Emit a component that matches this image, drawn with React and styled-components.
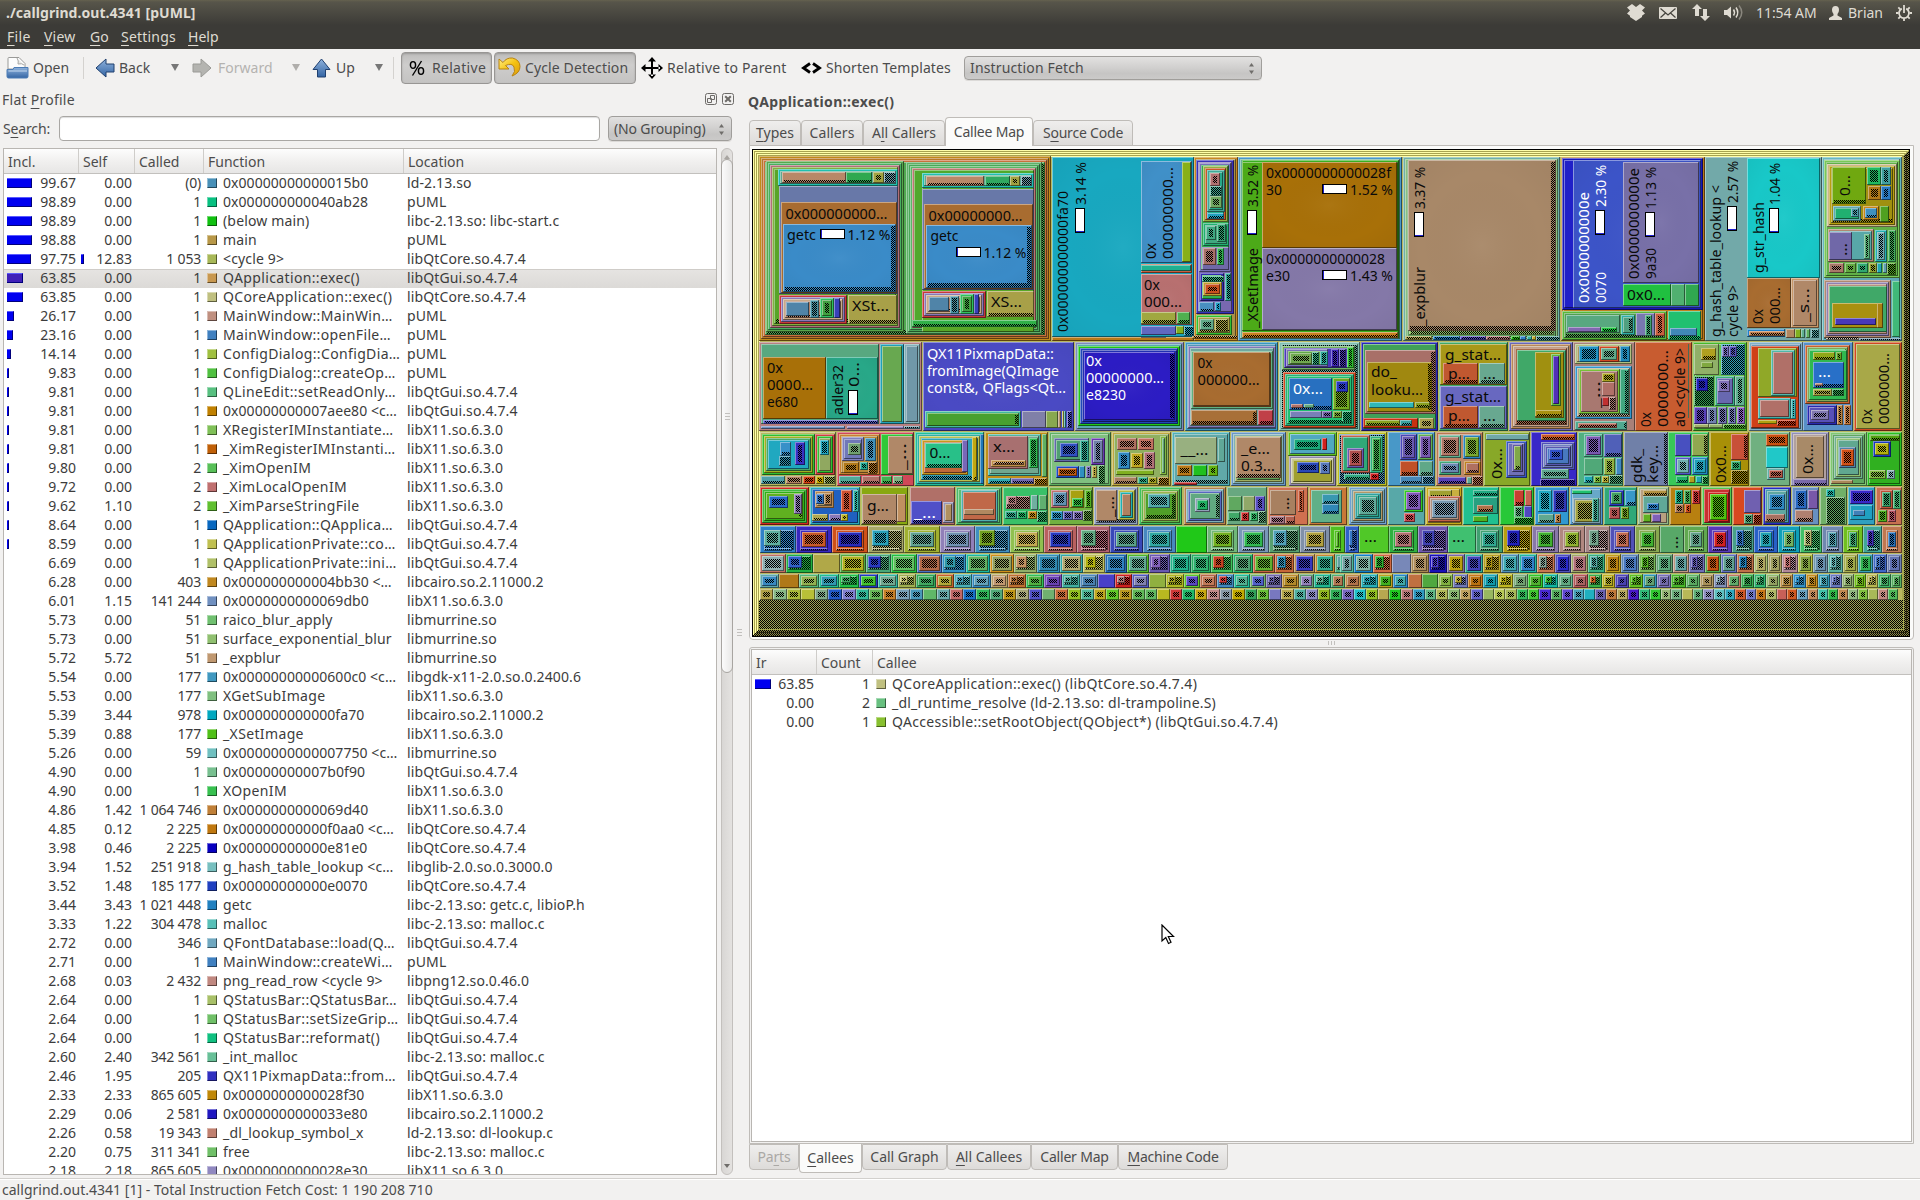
import React from "react";
import styled, { createGlobalStyle } from "styled-components";

const Global = createGlobalStyle`
  * { box-sizing: border-box; }
  body { margin: 0; background: #f2f1f0; overflow: hidden; }
  u { text-decoration-thickness: 1px; text-underline-offset: 3px; }
`;

const Window = styled.div`
  width: 1920px;
  height: 1200px;
  display: flex;
  flex-direction: column;
  background: #f2f1f0;
  color: #4c4c4c;
  font: 14px/19px "Noto Sans", "Open Sans", sans-serif;
  white-space: pre;
  overflow: hidden;
`;

/* ---------- top panel ---------- */
const TopPanel = styled.header`
  height: 49px;
  flex: none;
  background: linear-gradient(#65624f 0, #57554a 2px, #3c3b37 25px, #3c3b37 100%);
  color: #dfdbd2;
`;
const TitleRow = styled.div`
  height: 25px;
  display: flex;
  align-items: center;
  padding-left: 6px;
`;
const Title = styled.div`
  width: 1621px;
  font-weight: 700;
  letter-spacing: 0.05px;
  padding-bottom: 1px;
`;
const Indicator = styled.div`
  width: ${(p) => p.$w}px;
  flex: none;
  display: flex;
  align-items: center;
  letter-spacing: ${(p) => p.$ls || 0}px;
`;
const MenuRow = styled.nav`
  height: 24px;
  display: flex;
  align-items: center;
  padding: 0 0 2px 7px;
`;
const MenuItem = styled.span`
  width: ${(p) => p.$w}px;
  letter-spacing: ${(p) => p.$ls || 0}px;
`;

/* ---------- toolbar ---------- */
const Toolbar = styled.div`
  height: 38px;
  flex: none;
  display: flex;
  align-items: center;
  padding: 0 0 1px 6px;
`;
const Tool = styled.div`
  width: ${(p) => p.$w}px;
  flex: none;
  display: flex;
  align-items: center;
  gap: ${(p) => p.$gap ?? 4}px;
  color: ${(p) => (p.$off ? "#b5b3b0" : "#4c4c4c")};
  letter-spacing: ${(p) => p.$ls || 0}px;
`;
const Divider = styled.div`
  width: 1px;
  height: 22px;
  flex: none;
  background: #d4d2cf;
  margin-right: ${(p) => p.$gap}px;
`;
const Caret = styled.div`
  width: 0;
  flex: none;
  border: 4px solid transparent;
  border-top: 7px solid ${(p) => (p.$off ? "#b0aeab" : "#777")};
  border-bottom: 0;
  margin-right: ${(p) => p.$gap}px;
`;
const Toggle = styled.div`
  width: ${(p) => p.$w}px;
  height: 32px;
  flex: none;
  display: flex;
  align-items: center;
  gap: ${(p) => p.$gap}px;
  padding-left: ${(p) => p.$pl}px;
  margin-right: ${(p) => p.$mr}px;
  border: 1px solid #989694;
  border-radius: 4px;
  background: linear-gradient(#bebdbc, #cecdcc 40%, #c4c3c2);
  box-shadow: inset 0 1px 2px rgba(0, 0, 0, 0.2);
  letter-spacing: ${(p) => p.$ls || 0}px;
`;
const Combo = styled.div`
  width: ${(p) => p.$w}px;
  height: ${(p) => p.$h}px;
  flex: none;
  display: flex;
  align-items: center;
  justify-content: space-between;
  padding: 0 6px 0 5px;
  border: 1px solid #a09e9b;
  border-radius: 4px;
  background: linear-gradient(#e2e1e0, #d2d1d0 45%, #c6c5c4 75%, #cbcac9);
  box-shadow: 0 1px 0 #dcdad8;
  letter-spacing: ${(p) => p.$ls || 0}px;
`;

/* ---------- body ---------- */
const Main = styled.main`
  flex: 1;
  display: flex;
  min-height: 0;
`;
const LeftPane = styled.section`
  width: 737px;
  flex: none;
  display: flex;
  flex-direction: column;
`;
const DockTitle = styled.div`
  height: 26px;
  display: flex;
  align-items: center;
  padding: 0 3px 2px 2px;
  gap: 5px;
  letter-spacing: 0.25px;
  & > span { flex: 1; }
`;
const SearchRow = styled.div`
  height: 32px;
  display: flex;
  align-items: center;
  padding: 0 0 1px 3px;
  letter-spacing: -0.15px;
`;
const SearchLabel = styled.label`
  width: 56px;
`;
const SearchInput = styled.div`
  width: 541px;
  height: 25px;
  margin-right: 8px;
  border: 1px solid #a9a7a4;
  border-radius: 4px;
  background: #fff;
  box-shadow: inset 0 1px 1px #ddd;
`;
const ListArea = styled.div`
  height: 1027px;
  margin: 3px 0 0 3px;
  display: flex;
  gap: 4px;
`;
const List = styled.div`
  width: ${(p) => p.$w}px;
  flex: none;
  border: 1px solid #b9b6b2;
  background: #fff;
  overflow: hidden;
`;
const HeaderRow = styled.div`
  height: 25px;
  display: flex;
  background: linear-gradient(#fdfdfd, #f1f0ef 50%, #e7e6e5);
  border-bottom: 1px solid #c2c0bd;
`;
const HeaderCell = styled.div`
  width: ${(p) => p.$w}px;
  flex: none;
  padding: 3px 0 0 4px;
  border-right: ${(p) => (p.$last ? 0 : 1)}px solid #cfcdca;
`;
const Row = styled.div`
  height: 19px;
  display: flex;
  align-items: center;
  padding-bottom: 2px;
  color: #3c3c3c;
  background: ${(p) => (p.$sel ? "linear-gradient(#e6e4e2, #dcdad7)" : "none")};
  box-shadow: ${(p) => (p.$sel ? "inset 0 1px #cfccc8" : "none")};
`;
const NumCell = styled.div`
  width: ${(p) => p.$w}px;
  flex: none;
  display: flex;
  align-items: center;
  justify-content: space-between;
  padding: 0 2px 0 3px;
  & > span { margin-left: auto; }
  letter-spacing: ${(p) => p.$ls || 0}px;
`;
const Meter = styled.i`
  height: 10px;
  background: ${(p) => p.$c};
  border-right: 1px solid #00007a;
  border-bottom: 1px solid #00007a;
  border-top: 1px solid #5a5aff;
`;
const NameCell = styled.div`
  width: ${(p) => p.$w}px;
  flex: none;
  display: flex;
  align-items: center;
  gap: 6px;
  padding-left: ${(p) => p.$pl ?? 4}px;
  letter-spacing: ${(p) => p.$ls || 0}px;
`;
const Swatch = styled.i`
  width: 10px;
  height: 10px;
  flex: none;
  background: ${(p) => p.$c};
  border: 1px solid;
  border-color: rgba(255, 255, 255, 0.4) rgba(0, 0, 0, 0.5) rgba(0, 0, 0, 0.5) rgba(255, 255, 255, 0.4);
  background-clip: border-box;
`;
const ScrollBar = styled.div`
  width: 12px;
  display: flex;
  flex-direction: column;
  align-items: center;
  justify-content: space-between;
  padding: 6px 0;
  border: 1px solid #c3c0bd;
  border-radius: 6px;
  background: linear-gradient(90deg, #d8d6d4, #e4e2e0);
`;
const Thumb = styled.div`
  width: 12px;
  height: 514px;
  margin: 0 -1px auto;
  border: 1px solid #a8a5a1;
  border-radius: 6px;
  background: linear-gradient(90deg, #fbfbfb, #e9e8e7);
  display: flex;
  align-items: center;
  justify-content: center;
`;
const Grip = styled.div`
  width: ${(p) => (p.$v ? 8 : 5)}px;
  height: ${(p) => (p.$v ? 4 : 7)}px;
  background: repeating-linear-gradient(${(p) => (p.$v ? "90deg" : "180deg")}, #c2c0bd 0 1px, transparent 1px 3px);
`;
const Splitter = styled.div`
  width: 11px;
  flex: none;
  display: flex;
  padding-left: 0;
  padding-top: 542px;
`;
const RightPane = styled.section`
  flex: 1;
  display: flex;
  flex-direction: column;
`;
const FunctionTitle = styled.h1`
  height: 29px;
  margin: 0;
  padding-top: 5px;
  font-size: 14px;
  line-height: 19px;
  letter-spacing: 0.37px;
`;
const Tabs = styled.div`
  height: ${(p) => (p.$below ? 29 : 30)}px;
  display: flex;
  align-items: ${(p) => (p.$below ? "flex-start" : "flex-end")};
  padding-left: 1px;
  position: relative;
`;
const Tab = styled.div`
  width: ${(p) => p.$w}px;
  height: ${(p) => (p.$on ? 29 : 26)}px;
  padding-bottom: 2px;
  display: flex;
  align-items: center;
  justify-content: center;
  border: 1px solid #bfbcb8;
  border-${(p) => (p.$below ? "top" : "bottom")}: ${(p) => (p.$on ? 0 : 1)}px solid #bfbcb8;
  border-radius: ${(p) => (p.$below ? "0 0 4px 4px" : "4px 4px 0 0")};
  background: ${(p) => (p.$on ? "#fbfbfa" : "linear-gradient(#efeeed, #dddbd9)")};
  color: ${(p) => (p.$off ? "#aaa8a5" : "#4c4c4c")};
  letter-spacing: ${(p) => p.$ls ?? -0.2}px;
`;
const MapFrame = styled.div`
  width: 1165px;
  height: 495px;
  flex: none;
  margin-left: 1px;
  margin-top: -1px;
  padding: 3px 0 0 2px;
  border: 1px solid #bfbcb8;
  border-radius: 0 0 4px 4px;
  background: #fbfbfa;
  line-height: 0;
`;
const HSplitter = styled.div`
  height: 7px;
  flex: none;
  padding: 1px 0 0 580px;
`;
const CalleeFrame = styled.div`
  width: 1165px;
  height: 497px;
  flex: none;
  margin-left: 1px;
  padding: 1px;
  border: 1px solid #bfbcb8;
  border-radius: 3px 3px 0 0;
  display: flex;
`;
const StatusBar = styled.footer`
  height: 22px;
  flex: none;
  border-top: 1px solid #d2d0cd;
  box-shadow: inset 0 1px #fff;
  padding: 1px 0 0 2px;
  letter-spacing: 0.02px;
`;
const Pointer = styled.svg`
  position: absolute;
  left: 1161px;
  top: 924px;
`;

/* ---------- function list data ---------- */
const FUNCS = `99.67|0.00|(0)|4890b8|0x00000000000015b0|ld-2.13.so
98.89|0.00|1|08c080|0x000000000040ab28|pUML
98.89|0.00|1|10c010|(below main)|libc-2.13.so: libc-start.c
98.88|0.00|1|b89848|main|pUML
97.75|12.83|1 053|a8b858|<cycle 9>|libQtCore.so.4.7.4
63.85|0.00|1|c89850|QApplication::exec()|libQtGui.so.4.7.4
63.85|0.00|1|c0c080|QCoreApplication::exec()|libQtCore.so.4.7.4
26.17|0.00|1|c09080|MainWindow::MainWin…|pUML
23.16|0.00|1|4080c0|MainWindow::openFile…|pUML
14.14|0.00|1|a0c040|ConfigDialog::ConfigDia…|pUML
9.83|0.00|1|50c040|ConfigDialog::createOp…|pUML
9.81|0.00|1|58c080|QLineEdit::setReadOnly…|libQtGui.so.4.7.4
9.81|0.00|1|c08000|0x00000000007aee80 <c…|libQtGui.so.4.7.4
9.81|0.00|1|80c058|XRegisterIMInstantiate…|libX11.so.6.3.0
9.81|0.00|1|c06008|_XimRegisterIMInstanti…|libX11.so.6.3.0
9.80|0.00|2|58c058|_XimOpenIM|libX11.so.6.3.0
9.72|0.00|2|c07070|_XimLocalOpenIM|libX11.so.6.3.0
9.62|1.10|2|60c030|_XimParseStringFile|libX11.so.6.3.0
8.64|0.00|1|0868c0|QApplication::QApplica…|libQtGui.so.4.7.4
8.59|0.00|1|c0c050|QApplicationPrivate::co…|libQtGui.so.4.7.4
6.69|0.00|1|b0c068|QApplicationPrivate::ini…|libQtGui.so.4.7.4
6.28|0.00|403|c08820|0x000000000004bb30 <…|libcairo.so.2.11000.2
6.01|1.15|141 244|7090c0|0x0000000000069db0|libX11.so.6.3.0
5.73|0.00|51|70c070|raico_blur_apply|libmurrine.so
5.73|0.00|51|90c070|surface_exponential_blur|libmurrine.so
5.72|5.72|51|c09870|_expblur|libmurrine.so
5.54|0.00|177|4098c0|0x00000000000600c0 <c…|libgdk-x11-2.0.so.0.2400.6
5.53|0.00|177|80c080|XGetSubImage|libX11.so.6.3.0
5.39|3.44|978|00a8c0|0x000000000000fa70|libcairo.so.2.11000.2
5.39|0.88|177|50c018|_XSetImage|libX11.so.6.3.0
5.26|0.00|59|70c0c0|0x0000000000007750 <c…|libmurrine.so
4.90|0.00|1|78c090|0x00000000007b0f90|libQtGui.so.4.7.4
4.90|0.00|1|38c050|XOpenIM|libX11.so.6.3.0
4.86|1.42|1 064 746|c08038|0x0000000000069d40|libX11.so.6.3.0
4.85|0.12|2 225|c07810|0x00000000000f0aa0 <c…|libQtCore.so.4.7.4
3.98|0.46|2 225|0800c0|0x00000000000e81e0|libQtCore.so.4.7.4
3.94|1.52|251 918|78c0c0|g_hash_table_lookup <c…|libglib-2.0.so.0.3000.0
3.52|1.48|185 177|2040c0|0x00000000000e0070|libQtCore.so.4.7.4
3.44|3.43|1 021 448|2080c0|getc|libc-2.13.so: getc.c, libioP.h
3.33|1.22|304 478|58c0b8|malloc|libc-2.13.so: malloc.c
2.72|0.00|346|70a8c0|QFontDatabase::load(Q…|libQtGui.so.4.7.4
2.71|0.00|1|4080c0|MainWindow::createWi…|pUML
2.68|0.03|2 432|c08880|png_read_row <cycle 9>|libpng12.so.0.46.0
2.64|0.00|1|a8c068|QStatusBar::QStatusBar…|libQtGui.so.4.7.4
2.64|0.00|1|70c068|QStatusBar::setSizeGrip…|libQtGui.so.4.7.4
2.64|0.00|1|10c080|QStatusBar::reformat()|libQtGui.so.4.7.4
2.60|2.40|342 561|68c098|_int_malloc|libc-2.13.so: malloc.c
2.46|1.95|205|3030c0|QX11PixmapData::from…|libQtGui.so.4.7.4
2.33|2.33|865 605|c08808|0x0000000000028f30|libX11.so.6.3.0
2.29|0.06|2 581|2018c0|0x0000000000033e80|libcairo.so.2.11000.2
2.26|0.58|19 343|c08070|_dl_lookup_symbol_x|ld-2.13.so: dl-lookup.c
2.20|0.75|311 341|70c068|free|libc-2.13.so: malloc.c
2.18|2.18|865 605|9088c0|0x0000000000028e30|libX11.so.6.3.0`
  .split("\n")
  .map((l) => l.split("|"));

const nameSpacing = (name) => (name.startsWith("0x") ? 0.06 : /[A-Z]/.test(name) ? 0.36 : 0.16);

/* ---------- callee map ---------- */
/* Regions: [origin x, origin y, x scale, y scale, "x1 y1 x2 y2 nested,colours flags; ..."] */
const REGIONS = [
  [745, 145, 3, 3, `42 33 918 588 c08a18,b87828,c8703c,50a850 rb
62 48 478 562 58a84c,48b060,b07078,80b040,58a428 b
482 52 892 566 60b068,48a858,58b868,b87870,50a82c b
532 84 868 562 58a828
100 72 460 122 20c0b0,60a890
112 82 302 114 b88868 b
304 82 380 114 30a850 b
384 82 416 114 a0a040 c
418 82 452 114 6898a8 f
103 124 460 448 6878a8
109 172 456 444 a86c30
115 238 452 440 3a8bc8 rbg
103 450 306 536 c83838,8878b8,c8a888,b08068 b
124 470 192 512 5084a8
196 466 222 520 4890a0 c
226 460 268 520 30c060,40a040 c
268 460 286 520 3840b8
309 450 456 536 a8a048 b
532 84 868 130 20c0b0,60a890
542 94 718 122 b88868 b
720 94 794 122 30a860 b
796 94 826 122 a0a040 c
828 94 862 122 6898a8 f
532 132 868 434 6878a8
538 178 864 432 a86c30
544 240 860 428 3a8bc8 rbg
532 438 724 518 c83838,8878b8,c8a888,b08068 b
552 456 612 498 5084a8
614 452 642 506 4890a0 c
646 448 686 508 30c060,40a040 c
686 448 702 508 3840b8
727 438 866 516 a8a048 b
500 524 876 546 30b048 b
921 36 1348 575 18a8c0 g
921 576 1348 588 b87818
42 592 532 858 b88080
48 598 402 838 58a880
54 636 242 822 a87008
244 636 398 822 28a888 g
54 824 398 838 5058c8 b
406 598 476 838 20a0b8,68a850
478 598 526 838 80b0b8,7098a8
48 842 300 852 7090c0
306 842 476 852 9080b8
478 842 526 852 6898a8 f
535 592 986 858 4a4ac4 g
540 798 828 850 40b8a0,48a030 r
831 798 902 850 8080a8
904 798 938 850 88a850
938 798 948 850 b89870
950 798 956 850 c0c050
958 798 964 850 30a8b0
966 798 980 850 5050c0 f
989 592 1318 858 8088b8,58a8b0
1000 602 1304 842 20c818,2048b8
1010 614 1296 830 2030b0,2c1cc4 rg`],
  [1145, 145, 3, 3, `-13 48 142 354 4090c8 g
110 50 138 350 88b018
-13 357 142 384 c86040
-13 361 138 377 20b090
-13 386 142 540 b87070 g
-13 502 94 536 a0a840 b
96 502 136 536 50b050 b
-13 543 92 570 6068c0
94 543 118 568 80b020
118 543 146 574 2098b8 f
-13 575 62 580 b89890
148 36 278 588 c88820,a89048
154 44 266 508 3830b8,7868b0
162 54 258 382 7870b8,30a850
174 62 250 232 90b040,c85828,20b090
186 76 240 200 40a898,28a888
196 84 224 122 b07070 c
194 122 230 152 40a890 f
194 152 230 190 70a860 c
186 204 236 222 20a0c0 b
174 234 252 304 20b070,40a880
182 242 214 284 40a880 c
216 238 242 290 30a070 c
172 306 252 374 7068a8
174 310 214 360 a87068 c
216 310 238 360 30b050 c
164 384 238 468 3028b0,30b050
172 394 236 412 30b080 f
174 412 230 452 c0a030,c85020 c
240 384 258 468 30a898 r
162 470 208 500 4890c0 b
210 470 228 498 2098c0 c
154 510 262 570 30c030,a8a048 b
166 522 208 554 60a888 c
210 522 248 562 a8a040 f
140 574 278 582 b88028 b
280 36 772 588 4898c8,68b098
290 44 762 580 38b020
292 50 758 558 4caa18
352 50 756 308 a87008 g
352 309 756 555 8478a8 g
292 560 760 578 c88020 br
774 36 1245 588 70b0a8,88c080,60a060,90c068 b
790 46 1232 558 a88868 brg
780 572 862 586 a8a048 b
864 572 944 586 1878c0 b
946 572 1022 586 5048c0 b
1024 572 1096 586 b07070 b
1098 572 1124 586 20c010 b
1126 572 1144 586 3080c8
1146 572 1160 586 30b0a0
1162 572 1172 586 c0a820
1172 572 1245 588 50a0a0 f
120 592 400 858 3898c0,5098b8 r
130 604 392 850 8078b8,70a8a0
138 618 384 792 60b080,a86c30 b
144 622 376 782 a86c30 g
138 795 336 840 a87038 br
338 795 384 840 c04048 b
403 592 645 858 80c0b0,60a898 f
412 602 630 676 70b060,4838b8
424 612 550 666 7870b8,60a848
436 624 500 656 70a850 c
500 620 522 660 30b080 f
524 618 548 660 30a898 c
558 612 582 666 4028b8 c
582 612 602 666 4838b8 f
606 606 628 670 30c030 c
414 682 634 850 d04820,28b078,20c070 b
432 698 562 796 2870c0 b
438 776 474 790 b07068
476 776 508 790 60a880
564 698 616 796 70a820 c
574 708 608 742 2838c0 c
434 798 530 818 7880b8
532 798 562 818 7060a8 c
564 798 590 818 70a030 c
590 798 620 830 20b070 f
648 592 880 858 2828b8,40a058
660 616 872 808 a87068 r
666 652 862 800 a08810 r
672 770 808 790 30b8b8
810 770 856 790 88a020 b
654 820 820 850 c83010
660 824 764 844 88a020 b
766 824 800 844 38a0a0 b
822 820 868 852 a8a050 c
883 592 1090 858 40a868
886 598 1086 720 a89818
894 655 1000 716 c05830 b
1002 655 1080 716 68a890 b
886 724 1086 852 6868c0
894 784 1000 848 c05830 b
1002 784 1080 848 68a890 b
1093 592 1283 858 6868b8,b88858,c0a088,a86848 b
1116 614 1262 828 40a868
1170 622 1256 818 a09010
1219 628 1248 784 60b838,5030b8
1170 795 1252 816 a89010 b`],
  [1540, 145, 3, 3, `62 36 494 588 b87818,c08020
66 40 490 496 1818b8,2020c8
98 44 484 488 3c54c8 g
248 50 478 414 7870a8 g
248 416 392 482 20c040
393 416 434 482 50b070
435 416 476 482 30a850
66 498 382 586 58b838,50a050 rb
78 510 240 564 58a880
84 546 182 562 8068b0
184 546 230 562 20c040 b
242 510 284 570 30b0a8,50a080 r
288 504 344 574 7878b0
316 510 336 572 40a070 c
346 504 376 574 c86040 c
384 498 482 586 20c070 b
390 550 472 572 4088b8
496 36 846 588 72a9a9
621 40 840 398 18c8c8 g
621 400 752 550 a86c30 g
754 400 838 550 c89868,b08868
622 553 736 576 2080c8
626 558 734 574 c08050 b
738 553 764 578 b08860
765 553 782 578 80b020
784 553 796 578 60b090
798 553 811 578 60b060
812 553 838 578 50a0a0 f
847 36 1086 588 68b8c0,60a8b8
852 44 1080 400 78c858,60b048
862 56 1070 246 c8b888,b8a010,a09010 b
876 66 978 178 70a810 b
982 66 1022 120 20b860 c
1024 66 1052 120 40a0a0 c
984 124 1022 166 b07818 c
1024 124 1052 166 2878c0 c
878 184 962 228 60a8b0,20b070
932 190 956 216 4898a8 c
968 184 1018 224 c88818,4090c0 b
1020 184 1048 230 50a020
864 252 1002 350 b08870,58a8a8
868 262 936 346 7068a8
972 266 990 342 58b078 c
1006 254 1040 350 20b0b0,70a8b0 c
1044 254 1068 350 40a858 c
866 354 912 384 a87868 c
914 354 948 384 60a840 c
950 354 984 384 30a870 c
986 354 1010 384 90a030 c
1012 354 1026 384 20a8b0
1028 354 1042 384 60a0b0
1042 354 1068 390 50a020 f
852 406 1054 578 b08870,9080b0,b89080
866 424 1040 560 40a868
876 474 1030 550 a89010
884 518 1008 540 4838b8
1010 474 1028 548 a88010
1056 408 1080 576 40b878
858 580 956 586 b0a898 b
956 580 1086 588 6090a8 f
100 592 284 858 a88078
106 598 276 656 b0c080,a89860
116 604 176 652 2090c0 c
178 604 238 652 d04820,60a888 c
240 604 270 652 2088b8 c
106 662 276 822 3098d0,b0a890 b
118 672 240 808 78c038,a87870
186 684 226 710 a8a020 c
186 712 226 754 b07068
186 756 206 784 c03030
206 756 228 796 a87870 f
240 672 268 808 40a880 r
106 828 262 854 50a890 r
114 834 230 850 b06858 b
286 592 456 858 c85c30
444 598 448 820 40c080
458 592 622 858 48b828,68c050
462 598 538 690 90b068
484 610 528 646 b0a020 b
484 650 520 668 80a840
542 598 616 690 30a0b8 f
546 604 566 636 7068b8 c
568 604 590 636 5050b8 c
462 694 522 782 30a050 f
468 698 504 738 2020b8 c
524 694 584 782 38b080,6868b0
534 704 570 742 8070b8 c
586 694 616 782 60b090 c
462 786 500 836 5840b8 c
502 786 532 836 7080b0 c
534 786 562 836 7070b0 c
564 786 588 836 7078b8 c
590 786 616 836 8860c0 c
462 838 506 850 a0b068
508 838 548 850 90b068
550 838 618 852 50b030 f
626 592 788 858 80b0c8,7098b8
634 602 776 850 d04018
654 608 770 756 90a828
694 614 764 752 50b8a8,b07068
654 760 752 822 40b0a8,b07068
754 762 768 822 40b0b0 c
654 824 712 838 b0a010
712 824 768 842 d03010 f
790 592 940 858 5890c8
796 600 930 776 c86030,80a858,30c850
806 614 922 764 30b850
818 622 886 644 90a818 b
888 622 906 644 60a020 c
818 652 912 730 2870c8 b
818 732 876 752 a0a040 c
876 732 912 754 30a050 f
824 714 850 724 b08070
800 780 890 840 2828b0,5850b8
814 794 866 826 8078b0 c
890 780 910 840 b88040 c
912 780 934 840 c07840 c
942 592 1086 858 d04820,a8a848`],
  [745, 425, 2.6133, 3, `38 22 238 184 b8b860
44 28 182 150 30c030,a0b020,48a868,20a8c0
92 52 120 92 3890c8 b
90 92 120 122 3090b0 f
130 50 158 120 3830c0 c
184 28 236 150 d04040,30c030,90a860
196 46 220 90 20a8c0 c
42 154 104 176 50a0a8 b
106 154 150 176 b08060 c
152 154 184 176 d04010 c
186 154 206 176 c0a000 c
206 154 236 178 90a850 f
240 22 442 184 d04858
246 28 354 150 c88030,b88838
254 36 312 108 8080c0,7078b8
268 54 302 90 70a070 c
314 40 342 108 4090b8 c
256 112 298 144 b07818 c
300 112 322 136 20a890 c
322 112 344 146 b07020 f
356 28 440 150 30c838
374 34 438 148 b08868
246 154 304 178 50a898 b
306 154 354 178 b07068 b
356 154 384 178 40b050 b
386 154 414 178 80b080 b
445 22 625 184 20c098,30b0a8,b8c050,30a0b8 b
462 44 582 150 c89820,c06838
470 54 566 130 28c088 b
568 44 582 140 7868b8
592 36 606 168 c0a810 b
614 28 624 178 2078b8
628 22 792 184 c09018
634 28 774 152 50b8a0,70a890
636 34 740 132 a87070
642 104 734 126 c09048,b07848 b
742 40 766 130 30b850 c
776 28 790 156 60b060
634 158 694 178 30a8b0 b
696 158 754 178 7068b0 b
754 158 790 180 c08818 f
795 22 957 184 60b060,80c080
808 40 900 112 6068a8,50a070
822 54 870 96 3050c0 c
876 46 898 110 30a890 c
904 40 940 120 6838b0,7080a8 c
812 124 872 158 1848c0,c05810 c
874 124 888 158 3090c0
890 124 904 158 7068b0 c
906 124 920 158 b0a040 c
922 120 940 178 58b060 f
960 22 1112 184 c0a840,90b060
972 38 1024 76 b07060 c
1026 38 1070 76 c07060 c
974 82 1006 132 3088c0 c
1010 84 1040 130 c0a820 c
1044 82 1072 132 b07078 c
970 136 1068 150 80b020
1084 34 1104 150 80b840,60a870
964 156 1024 178 a88060 b
1026 156 1052 178 30a880 c
1054 156 1076 178 a0a020 c
1078 156 1108 180 b08020 f
1115 22 1267 184 50b0b8,60a8a8 b
1124 36 1234 118 98b080
1236 40 1254 112 60a898
1128 120 1168 152 b87818 c
1170 120 1208 152 20c020
1210 120 1236 152 60b010 c
1120 172 1180 180 c03030
1270 22 1415 184 6898c8,80b0b8,a0b060,60a058 r
1284 36 1402 158 b08868 b
1418 22 1548 92 60c020,50a8c0
1434 42 1506 74 18a878 c
1508 40 1520 74 d02020
1422 94 1544 184 9088b0,c8c8a0,a0a030
1442 112 1500 144 2848b8 c
1502 112 1530 146 5878b8 c
38 187 167 300 d02820,40b840,30b018,60b020 r
64 214 112 250 2868c8 c
128 206 150 266 8878b0 c
170 187 300 300 28a8b8,2060c0
182 198 232 250 b88850,a89868
186 208 206 236 3070c0 c
206 204 228 240 b08050 c
252 194 280 262 d05030 c
282 194 298 262 30b0a0 c
174 268 218 288 b0a850 b
220 268 250 288 8878b8 b
252 268 270 288 b8b020 c
303 187 427 300 88a810
306 208 396 296 b08868 b
398 208 420 292 c09060
430 187 549 300 b07068
433 228 516 296 5050c8 b
518 230 546 294 9898b8,b09060
552 187 672 300 48b868,60c070
564 196 662 290 50b0b0,c06848
572 252 652 270 b08860
675 187 792 300 38c068
682 212 746 252 a87870 f
684 214 710 240 b07878 c
748 210 766 254 70b0a0
768 210 788 254 60b070
680 258 710 282 30a888 c
712 258 738 282 20b060 c
740 258 764 282 c08818 c
764 258 790 290 30b068 f
795 187 910 300 70b040
800 194 846 250 c07070,6090b0 c
850 194 886 250 a8a010 b
854 218 882 246 30c040 c
888 194 906 250 50b020 c
800 258 830 284 2890c0 c
832 258 856 284 6060b8 c
858 258 882 284 7868b0 c
884 254 908 288 60a040 f
913 187 1027 300 90a0c0,7888a8 b
916 194 972 288 b08868
976 196 1018 284 b8b840,20b0b0,b08060
1030 187 1143 300 40c060,60b848,a0b050,50a028 rb
1052 208 1110 250 50a8a8 c
1146 187 1256 300 b88048,80b0b8,5868c0,60a880 r
1176 220 1216 260 90a0b8,20b060 c
1259 187 1365 300 68a880
1262 212 1300 258 60a860
1302 212 1332 258 90a868
1334 212 1360 258 5850c0 c
1262 262 1294 288 40a868 b
1296 262 1318 288 d03030 c
1320 262 1340 288 30b060 c
1340 258 1362 294 60a878 f
1368 187 1471 300 d07050
1372 196 1440 270 a88060
1444 196 1462 260 c05838 c
1372 274 1410 298 a07080 c
1412 274 1438 298 b06050 b
1474 187 1572 300 c87838
1480 196 1560 294 60b088
1508 206 1552 236 3898b0 b
1508 236 1552 268 3088b8 b`],
  [1340, 425, 2.7034, 3, `-8 22 127 184 c0c020,5090b8 f
4 30 80 144 c06050,30a878
20 70 66 130 6858b0,b05050 c
82 34 116 144 30b080,40b050 c
10 148 80 166 30a880 b
82 144 106 166 d02020 c
130 22 258 184 4898c8
162 28 208 104 4848b8,6858b0 c
212 28 252 104 60b050,7858b0 c
162 108 212 152 c05028 b
214 108 252 152 60a888 b
162 154 222 178 4888b8 b
222 154 254 178 4088b0 f
260 22 387 184 b87850,c08868
268 30 326 98 60b090,b07868 c
332 30 380 102 2880c0,78a830 c
268 108 328 150 40a878,6888b0 c
334 108 380 150 c08020,b07060 b
266 156 340 176 5840b8 b
342 156 356 176 60a890
356 152 386 180 b87050 f
389 22 514 184 88a828
394 28 510 44 70a8a8
450 48 506 158 3858c0,7070b8
464 58 494 140 6058a8,80a848 b
516 22 642 184 3828c8
544 28 634 46 c85828 b
544 50 634 134 5050b8,7080c0,5858b0,4878c0
566 72 604 104 3050c8 c
544 132 620 162 60a890 c
542 162 636 182 3020b0 f
644 22 766 184 50b080
660 28 712 96 50b090,7858b0 c
714 28 762 96 5060b8 b
660 100 712 150 50a878
714 100 744 150 90b040 c
746 100 762 150 4088c0
660 154 684 174 20a8b0 b
686 154 706 174 70b030 c
708 154 726 174 b0a830 c
728 150 764 178 50a878 f
768 22 886 184 7080a8 r
888 22 998 184 38c858
906 28 950 94 4850c0
952 28 994 94 90a850 r
906 96 948 150 5058c8,70b0b0 c
952 96 994 150 2088c0,20a0b8 c
908 152 942 174 20b068 b
944 152 960 174 b0a020
962 152 978 174 20a8b0
978 152 996 178 30b050 f
1000 22 1107 184 a89008
1058 28 1102 106 c85038 r
1058 108 1084 136 30a868 c
1056 136 1102 176 a08808 f
1109 22 1217 184 70b080
1152 28 1210 64 c85010 c
1152 66 1210 128 20c8c8
1154 130 1204 166 60b0a8,b05848 c
1219 22 1323 184 9090b8,b0a0a0
1234 34 1308 160 a88a68
1224 162 1316 182 7868a8 b
1325 22 1424 184 80c870,60a860
1336 34 1414 162 70b090,90c070,60a890
1350 66 1396 128 5080a8,d05018 c
1328 166 1386 176 a88858
1426 22 1520 184 28c020,30b020
1434 30 1514 48 50a010 b
1442 48 1490 96 1838c0,b0b010 c
1430 136 1476 162 80b840 c
1480 136 1500 162 80a8b0 c
24 187 127 300 70a0d0,70a0b0,b09868,30a0a0,30a890,60a898 c
131 187 230 300 58a8a8
172 194 224 260 30c820,8058b8 c
174 264 202 292 c84850 c
232 187 331 300 c8a818,c8b040
240 196 302 218 a0a030 b
238 214 326 292 c06048,b09080,7898b0 c
333 187 431 300 20c090
360 194 426 214 20a880 b
360 216 426 268 28a080
370 240 414 262 b07048 b
360 272 400 290 50b020
433 187 525 300 28c838
470 194 498 242 c84030 b
500 194 520 242 c86050
470 244 496 280 60b080 c
498 244 520 280 5048c0
470 276 522 296 28b030 f
528 187 620 300 3098d0
534 194 574 262 20a8c0 c
576 194 614 262 3038b8 c
534 266 578 294 60a890 b
580 266 598 294 b07840 c
622 187 712 300 5098d0,68a8c8
628 196 680 208 20c070
630 218 706 296 7898a8,a0a040 c
682 220 700 290 40a890 c
714 187 804 300 30a878
728 194 768 242 2838c0,40a060 c
770 194 800 242 3898c8 b
728 246 758 282 b05050 c
760 246 780 282 70a020 c
806 187 890 300 90b888,b8a080
820 194 884 212 b09040 b
820 214 888 264 60a898
830 234 862 256 2878c0 c
820 268 842 290 60b020
844 268 868 290 8060b8
892 187 976 300 b88010
906 194 928 236 18a880 c
930 194 950 236 40a850 c
952 194 972 236 c83030 c
906 238 930 264 b07850 c
932 238 950 264 c84818 c
978 187 1060 300 50c850,c83030
994 200 1052 290 d02020,50c010 c
1062 187 1141 300 d84820
1092 194 1138 264 7060b0
1092 266 1116 296 50a070 c
1116 266 1138 298 c04020 f
1143 187 1220 300 2828c0,4898b0,60a8a0
1160 206 1204 254 3088c0 c
1148 268 1204 290 a87060 b
1222 187 1296 300 6890c0
1230 194 1262 252 2868c0 c
1264 194 1292 252 7858a8
1230 256 1280 290 b08070 b
1298 187 1371 300 70b068
1314 192 1338 216 20b0a0 c
1314 216 1366 296 60a860 f
1373 187 1447 300 30a0c0
1380 196 1442 236 3828c8 c
1380 240 1442 284 20a0c0
1386 256 1418 272 4080b8
1449 187 1520 300 c87050
1460 196 1494 252 c05038,38a068 c
1496 194 1516 252 40b070 c
1454 256 1480 292 50b020 c
1482 256 1504 290 b05060 c`],
];

const SMALL_ROWS = [
  {
    y: 304, y2: 385,
    a: [38, 133, 227, 321, 416, 510, 602, 693, 781, 868, 953, 1040, 1126, 1207, 1288, 1369, 1450, 1530, 1568],
    ca: "3080c8:60b0a0 3828c0:c85828 d05018:2828b8 a8a868:28a0b8 a0b030:60a090 9080b8:7090b0 4090c0:70a020 90c050:c0a850 b86060:2838c0 b06070:60a880 3848b8:58a088 4888c0:30a8a0 20c818:20c818 70b878:70b020 7898b8:30b850 58a070:50a0b8 8090a8:b0a040 50c020:50b020",
    b: [14, 52, 133, 212, 291, 367, 442, 518, 591, 663, 729, 798, 864, 929, 994, 1059, 1120, 1184, 1243, 1303, 1359, 1413, 1466, 1520],
    cb: "3060c8:3878c8 50c828:50c828 30b040:b07070 7058b0:4040b0 40c070:40c070 40a070:30a890 b8a010:2020b8 8878a8:40b030 b08880:90b030 a88888:70a088 5050b8:c06850 88a850:40b030 58a868:58a868 60a850:60a088 5838b8:d02020 48a088:3070c0 2860c8:20a0b0 10a0b8:70b060 40c068:b0b870 7088b0:50a0b0 70c020:40a870 40a898:4030b8 c07850:2870b8",
  },
  {
    y: 388, y2: 445,
    a: [38, 106, 178, 247, 315, 382, 449, 516, 578, 640, 703, 763, 824, 883, 940, 998, 1055, 1111, 1166, 1219, 1275, 1328, 1384, 1436, 1490, 1541, 1568],
    ca: "c07060:90b0b0 20b040:3060c8 b0a848:b0a848 50a840:b0b020 48a878:2838c0 20c040:60c060 4870c0:b06848 3090c8:3098a8 18b8a0:60b060 d09018:90a060 90b068:c09060 3090b8:3088b0 30a8a8:b0a870 c0c060:b0b010 2068b0:3080c0 50b828:60a890 6858b0:8060b8 28b088:20b088 28b060:30b070 40c058:c04020 20b868:50a070 c86040:60b030 c86838:3090b8 b89050:3838c0 c88830:30a888 50b080:60a0a0",
    b: [0, 38, 90, 141, 191, 241, 289, 338, 387, 435, 484, 532, 582, 624, 670, 716, 761, 809, 854, 899, 944, 988, 1031, 1073, 1118, 1156, 1196, 1238, 1280, 1320, 1360, 1400, 1440, 1480, 1520],
    cb: "50b898:70a0a0 1080c8:80b0a0 d06840:30b030 7888b8:7888b8 a88850:b09060 1810b8:4838c8 7868a8:b8a010 30b098:4040b8 b8a020:a89010 5090b8:40a8b0 20b8a0:3080c8 c87850:80a090 5050b8:2828c8 a0a868:b07078 38b080:50a8a0 c0a018:b88010 6088b8:4878c0 78b858:50b020 60a070:58a878 c09880:60a0a0 7070b8:6058b0 50b050:c05010 6070c0:60a090 c07048:2080b8 a8c070:b0a860 a8a060:a0a060 b08898:c07070 b8c040:80a040 7098b0:6890b0 58b0a0:60b0b0 a8b050:a0a848 38a0b8:30b050 4068c8:4070c0 7080b0:6070b0",
  },
  {
    y: 448, y2: 490,
    a: [38, 88, 140, 194, 246, 297, 348, 399, 447, 498, 547, 594, 642, 688, 735, 782, 828, 875, 922, 967, 1011, 1055, 1100, 1146, 1189, 1233, 1277, 1320, 1362, 1404, 1447, 1487, 1531, 1568],
    ca: "60a8a8:3888c0 b07818:b07818 50b878:90b050 20c090:3098b0 20c048:40a860 2038c0:40c030 30b8a0:70a890 a0b050:c0c070 30a858:40a860 c86028:b0a838 48b0b8:4098b0 3088c0:60a0b8 b8a068:c09870 c07030:b07038 30c058:50b040 7848b8:6840b0 40b0a0:50a898 5088b8:4880b0 4840c8:4840c8 d02020:b07878 5058c0:8080b0 90b040:90b040 b0b820:a0a020 60c828:5848c0 b86848:c07858 4088c0:c83838 20c098:50b090 70b068:5060c8 7068a8:6860a8 c09030:b08828 60a070:9080b8 20b890:60b090 50b070:b07850",
    b: [14, 58, 102, 142, 183, 223, 264, 305, 345, 387, 427, 468, 508, 549, 589, 630, 671, 707, 743, 781, 818, 857, 895, 935, 973, 1010, 1046, 1083, 1118, 1153, 1189, 1225, 1260, 1292, 1325, 1358, 1390, 1423, 1455, 1490, 1520],
    cb: "c09048:b07048 28b0b8:2098a8 c0a020:40b020 2888c8:40a8a8 c07040:c07040 50a840:50a840 90c050:80b040 7078b8:b0a030 c87818:b87010 20a8b8:1098a8 c0b820:b0a810 80b080:70a070 30c828:50b030 10b8a0:30b030 68b890:60a880 b85858:a86060 38b048:c06020 c0b020:b0a828 5048b8:4840b0 60c020:50b020 3098b8:60a070 7870b8:7068a8 48b828:48a828 60b868:58a860 b09860:a89058 8090b8:80a0b0 c07860:60a868 38b050:30a048 30b870:40a860 90c070:90a060 c09048:b08840 3090c8:2888c0 c89020:b88018 3098b8:40a0b0 6878c0:6070b8 90b070:88a868 70c018:68b018 b8b850:b0a850 40b868:40a860 58b060:50a858",
  },
];

const ROW8A = "b0a048 88b888 a8b838 b8c038 80a888 2058c8 8080d0 30b898 68b858 c88028 78a0b8 4898b8 60b868 68a8a8 c06868 1870c8 30b858 50a878 c09818 a8a878 5050c8 70b070 c86838 90c020 50b898 c0a820 60c828 b89820 60b858 60b860 b8b820 d03838 20b868 c8a810 c08888 8898a8 c0a800 30a058 68c038 7878c0 b8a850 50b0a0 8888c0".split(" ");
const ROW8B = "90b820 30b058 7868c0 20c0c8 90c020 b8a850 20c820 b87878 3098c0 60b888 b0b858 88b870 c0a060 6060c8 98b860 b8c858 a8b858 30b858 40c830 4828d0 58b060 6048d0 48a0b8 20b0c0 6860b0 c07838 b8a860 4818c8 30b878 30c830 98b878 70b080 b8b858 60b078 9090c0 60c0c0 30a8c0 d05828 7078c8 c87818 b0b868 c86058 d05820 68a0c0 c08858 40c0a8 30b848 c08850 90b880 80c040 a8b858 c08880 50b858".split(" ");

const buildTiles = () => {
  const out = [];
  REGIONS.forEach(([ox, oy, sx, sy, src]) => {
    src.split("\n").forEach((line) => {
      const [x1, y1, x2, y2, cols, flags = ""] = line.trim().split(" ");
      const X = Math.round(ox + x1 / sx);
      const Y = Math.round(oy + y1 / sy);
      out.push([X, Y, Math.round(ox + x2 / sx) - X, Math.round(oy + y2 / sy) - Y, cols.split(","), flags]);
    });
  });
  let n = 0;
  const small = (x1, x2, y1, y2, pair) => {
    const X = Math.round(x1);
    const Y = Math.round(y1);
    const w = Math.round(x2) - X;
    const h = Math.round(y2) - Y;
    const [c, d] = pair.split(":");
    n += 1;
    if (h < 13) {
      out.push([X, Y, w, h, [c], n % 9 === 7 ? "" : "c"]);
      return;
    }
    out.push([X, Y, w, h, [c], ""]);
    if (c === d) return;
    const wide = h > 22;
    const side = n % 3 === 1;
    const i = wide ? 4 : 2;
    if (side) out.push([X + i, Y + i, w - i - 2, h - i - 3, [c], "f"]);
    out.push([X + i, Y + i, Math.round((w - 2 * i) * (side ? 0.6 : 1)), h - 2 * i - (side ? 3 : 0), wide && !side ? [c, d] : [d], "c"]);
    if (wide) out.push([X + 4, Y + h - 5, w - 8, 3, [c], "f"]);
  };
  SMALL_ROWS.forEach((r) => {
    r.ca.split(" ").forEach((p, i) => small(745 + r.a[i] / 2.6133, 745 + r.a[i + 1] / 2.6133, 425 + r.y / 3, 425 + r.y2 / 3, p));
    r.cb.split(" ").forEach((p, i) => small(1340 + r.b[i] / 2.7034, 1340 + r.b[i + 1] / 2.7034, 425 + r.y / 3, 425 + r.y2 / 3, p));
  });
  const all = [...ROW8A, ...ROW8B];
  let x = 759.5;
  all.forEach((c, i) => {
    const w = 14.6 - (i / all.length) * 4.3;
    const w2 = (w * 1136) / (all.length * 12.45);
    small(x, x + w2, 589, 600, c);
    x += w2;
  });
  return out;
};

const Tile = ({ t: [x, y, w, h, cols, flags] }) => {
  const parts = [];
  let X = x, Y = y, W = w, H = h;
  cols.forEach((c, i) => {
    if (W < 1 || H < 1) return;
    if (i) {
      X += 2; Y += 2; W -= 4; H -= 4;
    }
    if (W < 1 || H < 1) return;
    parts.push(
      <g key={i}>
        <rect x={X} y={Y} width={W} height={H} fill={"#" + c} />
        <path d={`M${X} ${Y}h${W}v1h${1 - W}v${H - 1}h-1z`} fill="#fff" fillOpacity=".4" />
        <path d={`M${X + W} ${Y}v${H}h${-W}v-1h${W - 1}v${1 - H}z`} fill="#000" fillOpacity=".5" />
      </g>
    );
  });
  const hatch = (k, a, b, c, d) => c > 0 && d > 0 && parts.push(<rect key={k} x={a} y={b} width={c} height={d} fill="url(#hatch)" />);
  if (flags.includes("g")) parts.push(<rect key="g" x={X + 1} y={Y + 1} width={W - 2} height={H - 2} fill="url(#cushion)" />);
  if (flags.includes("f")) hatch("f", X + 1, Y + 1, W - 2, H - 2);
  if (flags.includes("c")) {
    const i = W > 9 && H > 9 ? 3 : 2;
    hatch("c", X + i, Y + i, W - 2 * i, H - 2 * i);
  }
  const th = W > 60 && H > 60 ? 4 : H < 12 ? 2 : 3;
  if (flags.includes("b")) hatch("b", X + 2, Y + H - th - 1, W - 3, th);
  if (flags.includes("r")) hatch("r", X + W - th - 1, Y + 2, th, H - 4);
  return <>{parts}</>;
};

/* [x, baseline, text, width, vertical, white] */
const LABELS = [
  [785.5, 218.5, "0x000000000…", 102], [787, 240, "getc", 29], [847.5, 240, "1.12 %", 43],
  [928.5, 220.5, "0x00000000…", 94], [930.5, 241, "getc", 28], [983.5, 258, "1.12 %", 43],
  [1068, 332, "0x000000000000fa70", 141, 1], [1085.5, 205, "3.14 %", 43, 1],
  [852, 311, "XSt…", 37], [991, 307, "XS…", 31],
  [767, 373, "0x", 16], [767, 390, "0000…", 46], [767, 407, "e680", 31],
  [842.5, 415, "adler32", 50, 1], [859, 387, "0…", 25, 1],
  [927, 358.5, "QX11PixmapData::", 127, 0, 1], [927, 375.5, "fromImage(QImage", 132, 0, 1], [927, 392.5, "const&, QFlags<Qt…", 139, 0, 1],
  [1086, 366, "0x", 16, 0, 1], [1086, 383, "00000000…", 78, 0, 1], [1086, 400, "e8230", 40, 0, 1],
  [1156, 259, "0x", 16, 1], [1173, 259, "000000000…", 92, 1], [1144, 290, "0x", 16], [1144, 307, "000…", 38],
  [1258, 328, "_XSetImage", 80, 1], [1258, 207, "3.52 %", 42, 1],
  [1266, 178, "0x0000000000028f", 125], [1266, 195, "30", 16], [1350, 195, "1.52 %", 43],
  [1266, 264, "0x0000000000028", 119], [1266, 281, "e30", 24], [1350, 281, "1.43 %", 43],
  [1425, 326, "_expblur", 59, 1], [1425, 209, "3.37 %", 42, 1],
  [1197.5, 368, "0x", 15], [1197.5, 385, "000000…", 62], [1293, 394, "0x…", 30, 0, 1],
  [1371, 377, "do_", 26], [1371, 395, "looku…", 52],
  [1445, 360, "g_stat…", 56], [1448, 379, "p…", 22], [1483, 379, "…", 13],
  [1445, 402, "g_stat…", 56], [1448, 421, "p…", 22], [1483, 421, "…", 13],
  [1589, 303, "0x0000000000e", 111, 1, 1], [1606, 303, "0070", 31, 1, 1], [1606, 207, "2.30 %", 42, 1, 1],
  [1639, 279, "0x0000000000e", 111, 1], [1656, 279, "9a30", 31, 1], [1656, 209, "1.13 %", 42, 1], [1627, 300, "0x0…", 38],
  [1720.5, 337, "g_hash_table_lookup <", 152, 1], [1738, 337, "cycle 9>", 52, 1], [1738, 203, "2.57 %", 42, 1],
  [1763.5, 273, "g_str_hash", 71, 1], [1780, 205, "1.04 %", 42, 1],
  [1763, 324, "0x", 15, 1], [1780, 324, "000…", 37, 1], [1809, 322, "_s…", 34, 1],
  [1850, 196, "0…", 21, 1], [1847, 256, "…", 13, 1],
  [1600, 408, "_…", 27, 1], [1651, 427, "0x", 15, 1], [1668, 427, "0000000…", 77, 1], [1685, 427, "a0 <cycle 9>", 79, 1],
  [1818, 377, "…", 13, 0, 1], [1872, 424, "0x", 15, 1], [1888.5, 424, "0000000…", 71, 1],
  [929.5, 458, "0…", 21], [993, 452, "x…", 22], [1180.5, 455, "__…", 28], [1241, 454, "_e…", 29], [1241, 471, "0.3…", 34],
  [906, 470, "_…", 27, 1], [867, 511, "g…", 22], [914, 518, "_…", 22, 0, 1], [1114, 517, "_…", 21, 1], [1289, 510, "…", 13, 1],
  [1364, 542, "…", 13], [1452, 542, "…", 13], [1678, 549, "…", 13, 1],
  [1501.5, 479, "0x…", 31, 1], [1642, 483, "gdk_", 34, 1], [1658, 483, "key…", 38, 1], [1726, 483, "0x0…", 38, 1], [1813, 474, "0x…", 30, 1],
];
const GAUGES = [
  [820, 229, 25, 10], [956, 247, 25, 10], [1075, 208, 10, 25], [848, 390, 10, 25], [1322, 184, 25, 10], [1322, 270, 25, 10],
  [1247, 210, 10, 25], [1414, 212, 10, 25], [1595, 210, 10, 25], [1645, 212, 10, 25], [1727, 206, 10, 25], [1769, 208, 10, 25],
];

const MapSvg = styled.svg`
  font: 14.5px "Noto Sans", sans-serif;
`;

const CalleeMap = () => (
  <MapSvg width="1158" height="488" viewBox="752 149 1158 488">
    <defs>
      <pattern id="hatch" width="2" height="2" patternUnits="userSpaceOnUse" shapeRendering="crispEdges">
        <path d="M0 0h1v1h-1zM1 1h1v1h-1z" fill="#000" />
      </pattern>
      <radialGradient id="cushion" r=".7">
        <stop offset="0" stopColor="#fff" stopOpacity=".04" />
        <stop offset=".6" stopColor="#000" stopOpacity="0" />
        <stop offset="1" stopColor="#000" stopOpacity=".04" />
      </radialGradient>
    </defs>
    <g shapeRendering="crispEdges">
      <rect x="752" y="149" width="1158" height="488" fill="#000" />
      <rect x="753" y="150" width="1156" height="486" fill="#b8b860" />
      {[0, 2, 4, 6].map((i) => (
        <path key={i} d={`M${753 + i} ${635 - i}V${150 + i}H${1908 - i}v1H${754 + i}V${635 - i}z`} fill="#ffffa8" />
      ))}
      {[1, 3, 5].map((i) => (
        <path key={i} d={`M${753 + i} ${635 - i}V${150 + i}H${1908 - i}v1H${754 + i}V${635 - i}z`} fill="#a8a450" />
      ))}
      <rect x="759" y="600" width="1144" height="29" fill="#a0a458" />
      <rect x="759" y="600" width="1144" height="29" fill="url(#hatch)" />
      <path d="M1903 157l6-7v486H753l6-7H1903z" fill="#8c8844" />
      <path d="M1903 157l6-7v486H753l6-7H1903z" fill="url(#hatch)" />
      <path d="M759 629.5H1903.500V157" fill="none" stroke="#a4a850" />
      <path d="M756 632.5H1906.500V154" fill="none" stroke="#282510" />
      <rect x="1902" y="156" width="1" height="444" fill="#a8a850" />
      {buildTiles().map((t, i) => (
        <Tile key={i} t={t} />
      ))}
      {GAUGES.map(([x, y, w, h]) => (
        <g key={x + "-" + y}>
          <rect x={x} y={y} width={w} height={h} fill="#000" />
          <rect x={x + 1} y={y + 1} width={w - 2} height={h - 2} fill="#fff" />
          {w > h ? <rect x={x + 1} y={y + 1} width="1" height={h - 2} fill="#2020d0" /> : <rect x={x + 1} y={y + h - 2} width={w - 2} height="1" fill="#2020d0" />}
        </g>
      ))}
    </g>
    {LABELS.map(([x, y, text, w, v, white], i) => (
      <text
        key={i}
        textLength={w}
        lengthAdjust="spacingAndGlyphs"
        fill={white ? "#fff" : "#0a0a0a"}
        transform={`translate(${x} ${y})${v ? " rotate(-90)" : ""}`}
      >
        {text}
      </text>
    ))}
  </MapSvg>
);

/* ---------- icons ---------- */
const BlueGrad = () => (
  <defs>
    <linearGradient id="blue" x2="0" y2="1">
      <stop offset="0" stopColor="#8fb2dc" />
      <stop offset="1" stopColor="#3465a4" />
    </linearGradient>
    <linearGradient id="gold" x2="1" y2="1">
      <stop offset="0" stopColor="#fff08a" />
      <stop offset=".5" stopColor="#f5c211" />
      <stop offset="1" stopColor="#d99a10" />
    </linearGradient>
  </defs>
);
const OpenIcon = () => (
  <svg width="23" height="23" viewBox="0 0 23 23">
    <BlueGrad />
    <path d="M2 13V2.500q0-1 1-1h10l6 6V13z" fill="#fdfdfd" stroke="#9a9a98" />
    <path d="M11 2q2 3 1 6 4-1 6 1" fill="#e8e8e6" stroke="#a8a8a6" />
    <path d="M1 13.500h6l1-2h14v9q0 1.500-1.500 1.500h-18Q1 22 1 20.500z" fill="url(#blue)" stroke="#4d7db5" />
    <path d="M2.500 15h18.500" stroke="#c4d8ef" />
  </svg>
);
const LeftArrow = () => (
  <svg width="20" height="20" viewBox="0 0 20 20">
    <path d="M1 10L11 1v5h8v8h-8v5z" fill="url(#blue)" stroke="#20406f" strokeLinejoin="round" />
  </svg>
);
const RightArrow = () => (
  <svg width="20" height="20" viewBox="0 0 20 20">
    <path d="M19 10L9 1v5H1v8h8v5z" fill="#b4b4b0" stroke="#9a9a96" strokeLinejoin="round" />
  </svg>
);
const UpArrow = () => (
  <svg width="19" height="20" viewBox="0 0 19 20">
    <path d="M9.500 1L18 11.500h-4.500V19h-8v-7.500H1z" fill="url(#blue)" stroke="#20406f" strokeLinejoin="round" />
  </svg>
);
const PercentIcon = () => (
  <svg width="16" height="16" viewBox="0 0 16 16" fill="none" stroke="#000" strokeWidth="1.400">
    <ellipse cx="4" cy="5" rx="2.600" ry="3.400" />
    <ellipse cx="12" cy="11" rx="2.600" ry="3.400" />
    <path d="M12.500 1L3.500 15.500" />
  </svg>
);
const CycleIcon = () => (
  <svg width="23" height="21" viewBox="0 0 23 21">
    <path d="M1 2v10h10l-3.500-3.500Q14 5.500 16 10t-2 9q8-3 8-9.500T14.500 1Q8.500.5 5 5.500z" fill="url(#gold)" stroke="#b98310" strokeLinejoin="round" />
  </svg>
);
const MoveIcon = () => (
  <svg width="22" height="22" viewBox="0 0 22 22" fill="#000">
    <path d="M10 3h2v16h-2zM3 10h16v2H3zM11 0l4 4.500H7zM11 22l4-4.500H7zM0 11l4.500-4v8zM22 11l-4.500-4v8z" />
  </svg>
);
const AngleIcon = () => (
  <svg width="21" height="12" viewBox="0 0 21 12" fill="none" stroke="#000" strokeWidth="2.800">
    <path d="M9 1.500L2.500 6 9 10.500M12 1.500L18.500 6 12 10.500" />
  </svg>
);
const ComboArrows = () => (
  <svg width="7" height="14" viewBox="0 0 7 14" fill="#6f6d6a">
    <path d="M3.500 2L6 5.500h-5zM3.500 13L6 9.500h-5z" />
  </svg>
);
const ScrollArrow = ({ down }) => (
  <svg width="6" height="4" viewBox="0 0 6 4" fill={down ? "#6f6d6a" : "#a8a5a1"}>
    <path d={down ? "M0 0h6L3 4z" : "M0 4h6L3 0z"} />
  </svg>
);
const FloatIcon = () => (
  <svg width="12" height="12" viewBox="0 0 12 12" fill="none" stroke="#6d6b68">
    <rect x=".5" y=".5" width="11" height="11" rx="2" />
    <path d="M5.500 2.500h4v4h-4zM2.500 5.500h4v4h-4z" />
  </svg>
);
const CloseIcon = () => (
  <svg width="12" height="12" viewBox="0 0 12 12" fill="none" stroke="#6d6b68">
    <rect x=".5" y=".5" width="11" height="11" rx="2" />
    <path d="M3.200 3.200l5.600 5.600M8.800 3.200L3.200 8.800" strokeWidth="2" />
  </svg>
);
const DropboxIcon = () => (
  <svg width="18" height="17" viewBox="0 0 18 17" fill="#dfdbd2">
    <path d="M5 0l4 3 4-3 5 3.500-3 3 3 3-3 2.200V13l-6 4-6-4v-1.300L0 9.500l3-3-3-3z" />
  </svg>
);
const MailIcon = () => (
  <svg width="18" height="12" viewBox="0 0 18 12">
    <rect width="18" height="12" rx="1" fill="#dfdbd2" />
    <path d="M1.500 1.500L9 8l7.500-6.500M1.500 10.500l5-4.500M16.500 10.500l-5-4.500" fill="none" stroke="#45433d" strokeWidth="1.200" />
  </svg>
);
const NetIcon = () => (
  <svg width="18" height="17" viewBox="0 0 18 17" fill="#dfdbd2">
    <path d="M5 0l5 5H7v7H3V5H0zM13 17l-5-5h3V5h4v7h3z" />
  </svg>
);
const VolumeIcon = () => (
  <svg width="20" height="17" viewBox="0 0 20 17" fill="none" stroke="#dfdbd2" strokeWidth="1.500">
    <path d="M0 6h3l4-3.500v12L3 11H0z" fill="#dfdbd2" stroke="none" />
    <path d="M9.500 5.500q2 3 0 6M12 3.500q3.500 5 0 10" />
    <path d="M15 1.500q5.500 7 0 14" stroke="#8a877e" />
  </svg>
);
const UserIcon = () => (
  <svg width="13" height="14" viewBox="0 0 13 14" fill="#dfdbd2">
    <path d="M6.500 0Q10 0 10 4q0 2.500-1.500 4v1.500l4.500 2.500v2H0v-2l4.500-2.500V8Q3 6.500 3 4 3 0 6.500 0z" />
  </svg>
);
const PowerIcon = () => (
  <svg width="16" height="16" viewBox="0 0 16 16" fill="none" stroke="#dfdbd2">
    <path d="M5.800 3.600a5 5 0 1 0 4.400 0" strokeWidth="1.800" />
    <path d="M8 0v8" strokeWidth="1.800" />
    <path d="M0 8h2.500M13.500 8H16M8 13.500V16M2.300 2.300l2 2M13.700 2.300l-2 2M2.300 13.700l2-2M13.700 13.700l-2-2" strokeWidth="1.800" />
  </svg>
);

export default function App() {
  return (
    <Window>
      <Global />
      <TopPanel>
        <TitleRow>
          <Title>./callgrind.out.4341 [pUML]</Title>
          <Indicator $w={32}><DropboxIcon /></Indicator>
          <Indicator $w={33}><MailIcon /></Indicator>
          <Indicator $w={32}><NetIcon /></Indicator>
          <Indicator $w={32}><VolumeIcon /></Indicator>
          <Indicator $w={73} $ls={-0.05}>11:54 AM</Indicator>
          <Indicator $w={19}><UserIcon /></Indicator>
          <Indicator $w={48}>Brian</Indicator>
          <Indicator $w={16}><PowerIcon /></Indicator>
        </TitleRow>
        <MenuRow>
          <MenuItem $w={37} $ls={0.3}><u>F</u>ile</MenuItem>
          <MenuItem $w={46} $ls={0.2}><u>V</u>iew</MenuItem>
          <MenuItem $w={31}><u>G</u>o</MenuItem>
          <MenuItem $w={67} $ls={0.2}><u>S</u>ettings</MenuItem>
          <MenuItem $w={40}><u>H</u>elp</MenuItem>
        </MenuRow>
      </TopPanel>

      <Toolbar>
        <Tool $w={77}><OpenIcon />Open</Tool>
        <Divider $gap={11} />
        <Tool $w={76}><LeftArrow />Back</Tool>
        <Caret $gap={13} />
        <Tool $w={100} $off $gap={6}><RightArrow />Forward</Tool>
        <Caret $off $gap={12} />
        <Tool $w={63} $gap={5}><UpArrow />Up</Tool>
        <Caret $gap={10} />
        <Divider $gap={7} />
        <Toggle $w={91} $pl={7} $gap={7} $mr={2} $ls={0.3}><PercentIcon />Relative</Toggle>
        <Toggle $w={142} $pl={3} $gap={4} $mr={5} $ls={0.12}><CycleIcon />Cycle Detection</Toggle>
        <Tool $w={160} $ls={0.2}><MoveIcon />Relative to Parent</Tool>
        <Tool $w={163} $ls={0.08}><AngleIcon />Shorten Templates</Tool>
        <Combo $w={298} $h={24} $ls={0.15}>Instruction Fetch<ComboArrows /></Combo>
      </Toolbar>

      <Main>
        <LeftPane>
          <DockTitle><span>Flat <u>P</u>rofile</span><FloatIcon /><CloseIcon /></DockTitle>
          <SearchRow>
            <SearchLabel>S<u>e</u>arch:</SearchLabel>
            <SearchInput />
            <Combo $w={124} $h={25} $ls={-0.15}>(No Grouping)<ComboArrows /></Combo>
          </SearchRow>
          <ListArea>
            <List $w={714}>
              <HeaderRow>
                <HeaderCell $w={75}>Incl.</HeaderCell>
                <HeaderCell $w={56}>Self</HeaderCell>
                <HeaderCell $w={69}>Called</HeaderCell>
                <HeaderCell $w={200}>Function</HeaderCell>
                <HeaderCell $w={312} $last>Location</HeaderCell>
              </HeaderRow>
              {FUNCS.map(([incl, self, called, color, name, loc], i) => (
                <Row key={i} $sel={i === 5}>
                  <NumCell $w={74}>
                    {incl > 8 && <Meter $c={i === 5 ? "#4020b8" : "#0000f0"} style={{ width: Math.round(incl / 4) }} />}
                    <span>{incl}</span>
                  </NumCell>
                  <NumCell $w={56}>
                    {self > 8 && <Meter $c="#0000f0" style={{ width: Math.round(self / 4) }} />}
                    <span>{self}</span>
                  </NumCell>
                  <NumCell $w={69} $ls={-0.2}><span>{called}</span></NumCell>
                  <NameCell $w={200} $ls={nameSpacing(name)}><Swatch $c={"#" + color} />{name}</NameCell>
                  <NameCell $w={300} $ls={0.12}>{loc}</NameCell>
                </Row>
              ))}
            </List>
            <ScrollBar>
              <ScrollArrow />
              <Thumb><Grip /></Thumb>
              <ScrollArrow down />
            </ScrollBar>
          </ListArea>
        </LeftPane>
        <Splitter><Grip /></Splitter>
        <RightPane>
          <FunctionTitle>QApplication::exec()</FunctionTitle>
          <Tabs>
            <Tab $w={52} $ls={0}><span><u>T</u>ypes</span></Tab>
            <Tab $w={62} $ls={0.1}>Callers</Tab>
            <Tab $w={82} $ls={0}><span>A<u>l</u>l Callers</span></Tab>
            <Tab $w={88} $on>Callee Map</Tab>
            <Tab $w={100}><span>S<u>o</u>urce Code</span></Tab>
          </Tabs>
          <MapFrame><CalleeMap /></MapFrame>
          <HSplitter><Grip $v /></HSplitter>
          <CalleeFrame>
            <List $w={1161}>
              <HeaderRow>
                <HeaderCell $w={65}>Ir</HeaderCell>
                <HeaderCell $w={56}>Count</HeaderCell>
                <HeaderCell $w={1000} $last>Callee</HeaderCell>
              </HeaderRow>
              <Row>
                <NumCell $w={64}><Meter $c="#0000f0" style={{ width: 16 }} /><span>63.85</span></NumCell>
                <NumCell $w={56}><span>1</span></NumCell>
                <NameCell $w={900} $ls={0.35}><Swatch $c="#c0c080" />QCoreApplication::exec() (libQtCore.so.4.7.4)</NameCell>
              </Row>
              <Row>
                <NumCell $w={64}><span>0.00</span></NumCell>
                <NumCell $w={56}><span>2</span></NumCell>
                <NameCell $w={900} $ls={0.2}><Swatch $c="#68c080" />_dl_runtime_resolve (ld-2.13.so: dl-trampoline.S)</NameCell>
              </Row>
              <Row>
                <NumCell $w={64}><span>0.00</span></NumCell>
                <NumCell $w={56}><span>1</span></NumCell>
                <NameCell $w={900} $ls={0.3}><Swatch $c="#88c030" />QAccessible::setRootObject(QObject*) (libQtGui.so.4.7.4)</NameCell>
              </Row>
            </List>
          </CalleeFrame>
          <Tabs $below>
            <Tab $below $w={50} $off><span>Pa<u>r</u>ts</span></Tab>
            <Tab $below $w={63} $on $ls={0}><span><u>C</u>allees</span></Tab>
            <Tab $below $w={85} $ls={0}>Call Graph</Tab>
            <Tab $below $w={84} $ls={0}><span><u>A</u>ll Callees</span></Tab>
            <Tab $below $w={87}>Caller Map</Tab>
            <Tab $below $w={110}><span><u>M</u>achine Code</span></Tab>
          </Tabs>
        </RightPane>
      </Main>
      <StatusBar>callgrind.out.4341 [1] - Total Instruction Fetch Cost: 1 190 208 710</StatusBar>
      <Pointer width="14" height="21" viewBox="0 0 14 21">
        <path d="M1 1v16l3.800-3.500L7.500 19.500l2.500-1.200-2.700-5.800H12.500z" fill="#fff" stroke="#000" strokeWidth="1.200" />
      </Pointer>
    </Window>
  );
}
